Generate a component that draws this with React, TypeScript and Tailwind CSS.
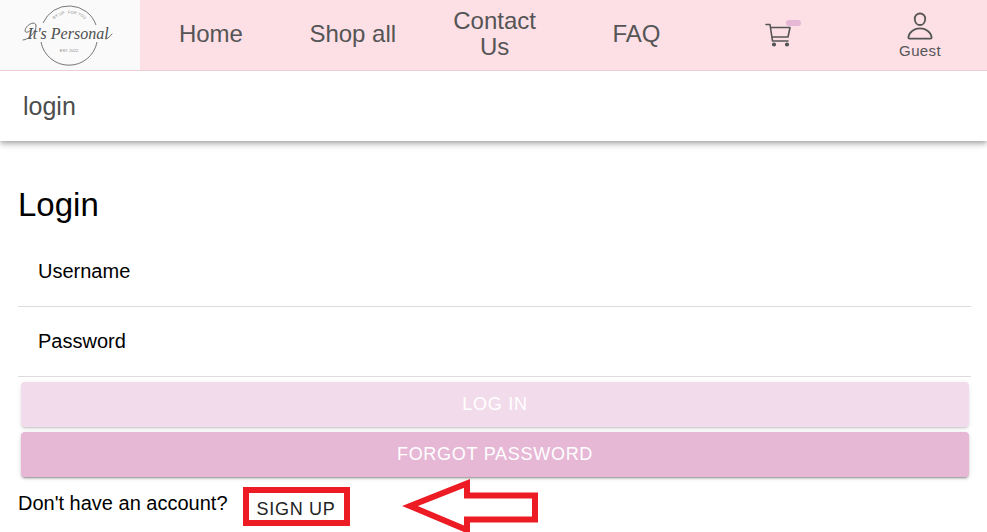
import React from "react";

const navLinks = ["Home", "Shop all", "Contact Us", "FAQ"];

function Logo() {
  return (
    <svg viewBox="0 0 140 70" className="h-[70px] w-[140px]" role="img" aria-label="It's Personal">
      <defs>
        <path id="motto" d="M49 26 A23 23 0 0 1 90 26" />
      </defs>
      <g fill="none" stroke="#777777" strokeWidth="1">
        <path d="M43 23 A28.500 28.500 0 0 1 96 25" />
        <path d="M41 42 A28.500 28.500 0 0 0 97 42" />
      </g>
      <g fontFamily="Liberation Sans, Arial, sans-serif" fontSize="4" fill="#888888" textAnchor="middle">
        <text>
          <textPath href="#motto" startOffset="50%">BY UP &#160; FOR YOU</textPath>
        </text>
        <text x="69" y="52">EST. 2022</text>
      </g>
      <text x="68" y="39" textAnchor="middle" fontFamily="Liberation Serif, Times New Roman, serif" fontStyle="italic" fontSize="16" fill="#505050">
        It's Personal
      </text>
      <g fill="none" stroke="#606060" strokeWidth="0.900" strokeLinecap="round">
        <path d="M23 40 C29 40 37 31 36 25 C34 20 25 26 25 31 C26 34 30 31 32 29" />
        <path d="M106 39 C109 38 110 36 112 34" />
      </g>
    </svg>
  );
}

function CartIcon() {
  return (
    <svg viewBox="0 0 27 24" className="h-6 w-[27px]" fill="none" stroke="#555555" strokeWidth="1.600" strokeLinecap="round" strokeLinejoin="round" aria-hidden="true">
      <path d="M1 1.500 H5 L7.500 18 H23 M5.500 4.500 H25 L23 14 H7" />
      <circle cx="9" cy="21.500" r="1.300" fill="#555555" />
      <circle cx="22" cy="21.500" r="1.300" fill="#555555" />
    </svg>
  );
}

function PersonIcon() {
  return (
    <svg viewBox="0 0 26 28" className="h-7 w-[26px]" fill="none" stroke="#555555" strokeWidth="1.800" strokeLinejoin="round" aria-hidden="true">
      <path d="M13 1.500 C9.700 1.500 7.600 4 7.800 7.200 C8 10.500 10.200 13 13 13 C15.800 13 18 10.500 18.200 7.200 C18.400 4 16.300 1.500 13 1.500 Z" />
      <path d="M13 16.400 C7.500 16.400 2.300 19.500 1.400 25 C1.200 26 1.700 26.600 2.600 26.600 H23.400 C24.300 26.600 24.800 26 24.600 25 C23.700 19.500 18.500 16.400 13 16.400 Z" />
    </svg>
  );
}

function Field({ id, label, type }: { id: string; label: string; type: string }) {
  return (
    <div className="flex h-[70px] items-center border-b border-[#dcdcdc] pb-0.5 pl-5">
      <label htmlFor={id} className="text-xl">{label}</label>
      <input id={id} name={id} type={type} className="h-10 min-w-0 flex-1 bg-transparent px-3 text-xl outline-none" />
    </div>
  );
}

const raised = "h-[45px] w-full rounded pb-0.5 text-lg tracking-[0.04em] text-white bg-[#e6b8d6] shadow-[0_3px_1px_-2px_rgba(0,0,0,0.2),0_2px_2px_0_rgba(0,0,0,0.14),0_1px_5px_0_rgba(0,0,0,0.12)]";

export default function App() {
  return (
    <div className="overflow-x-hidden bg-white font-['Liberation_Sans',Arial,sans-serif] text-black">
      <header className="bg-white shadow-[0_2px_4px_-1px_rgba(0,0,0,0.2),0_4px_5px_0_rgba(0,0,0,0.14),0_1px_10px_0_rgba(0,0,0,0.12)]">
        <nav className="flex h-[71px] border-b border-[#edcbd8] bg-[#fddfe6] text-[#555555]">
          <a href="#home" className="block shrink-0 bg-[#fafafa]"><Logo /></a>
          <div className="-mr-1 grid flex-1 grid-cols-6 items-center text-center">
            {navLinks.map((item) => (
              <a key={item} href="#" className="px-5 pb-0.5 text-2xl leading-[26px]">{item}</a>
            ))}
            <a href="#cart" aria-label="Cart" className="relative mx-auto">
              <CartIcon />
              <span className="absolute -top-[3px] left-[21px] h-1.5 w-[15px] rounded-full bg-[#e6b8d6]" />
            </a>
            <a href="#account" className="flex flex-col items-center text-[15px] leading-4 tracking-wide">
              <PersonIcon />
              <span className="pt-[3px]">Guest</span>
            </a>
          </div>
        </nav>
        <div className="flex h-[70px] items-center px-[23px] pt-0.5 text-[25px] text-[#4d4d4d]">login</div>
      </header>

      <main className="pt-10 pr-4 pl-[18px]">
        <h1 className="text-[33px] leading-[48px]">Login</h1>
        <form className="pt-2" onSubmit={(event) => event.preventDefault()}>
          <Field id="username" label="Username" type="text" />
          <Field id="password" label="Password" type="password" />
          <div className="flex flex-col gap-[5px] pt-[5px] pr-0.5 pl-[3px]">
            <button type="submit" disabled className={`${raised} opacity-50`}>LOG IN</button>
            <button type="button" className={raised}>FORGOT PASSWORD</button>
          </div>
        </form>
        <div className="flex items-start pt-0.5">
          <p className="pt-2.5 text-xl leading-7">Don't have an account?</p>
          <button type="button" className="mt-2 ml-[15px] h-[39px] w-[107px] border-[6px] border-[#ed1c24] pt-1 text-lg leading-6 tracking-[0.04em] text-[#222222]">SIGN UP</button>
          <svg viewBox="0 0 138 54" className="ml-[51px] h-[54px] w-[138px]" fill="none" stroke="#ed1c24" strokeWidth="6" aria-hidden="true">
            <path d="M9 27 L66 4.500 V16.500 H134 V40.500 H66 V51 Z" />
          </svg>
        </div>
      </main>
    </div>
  );
}
